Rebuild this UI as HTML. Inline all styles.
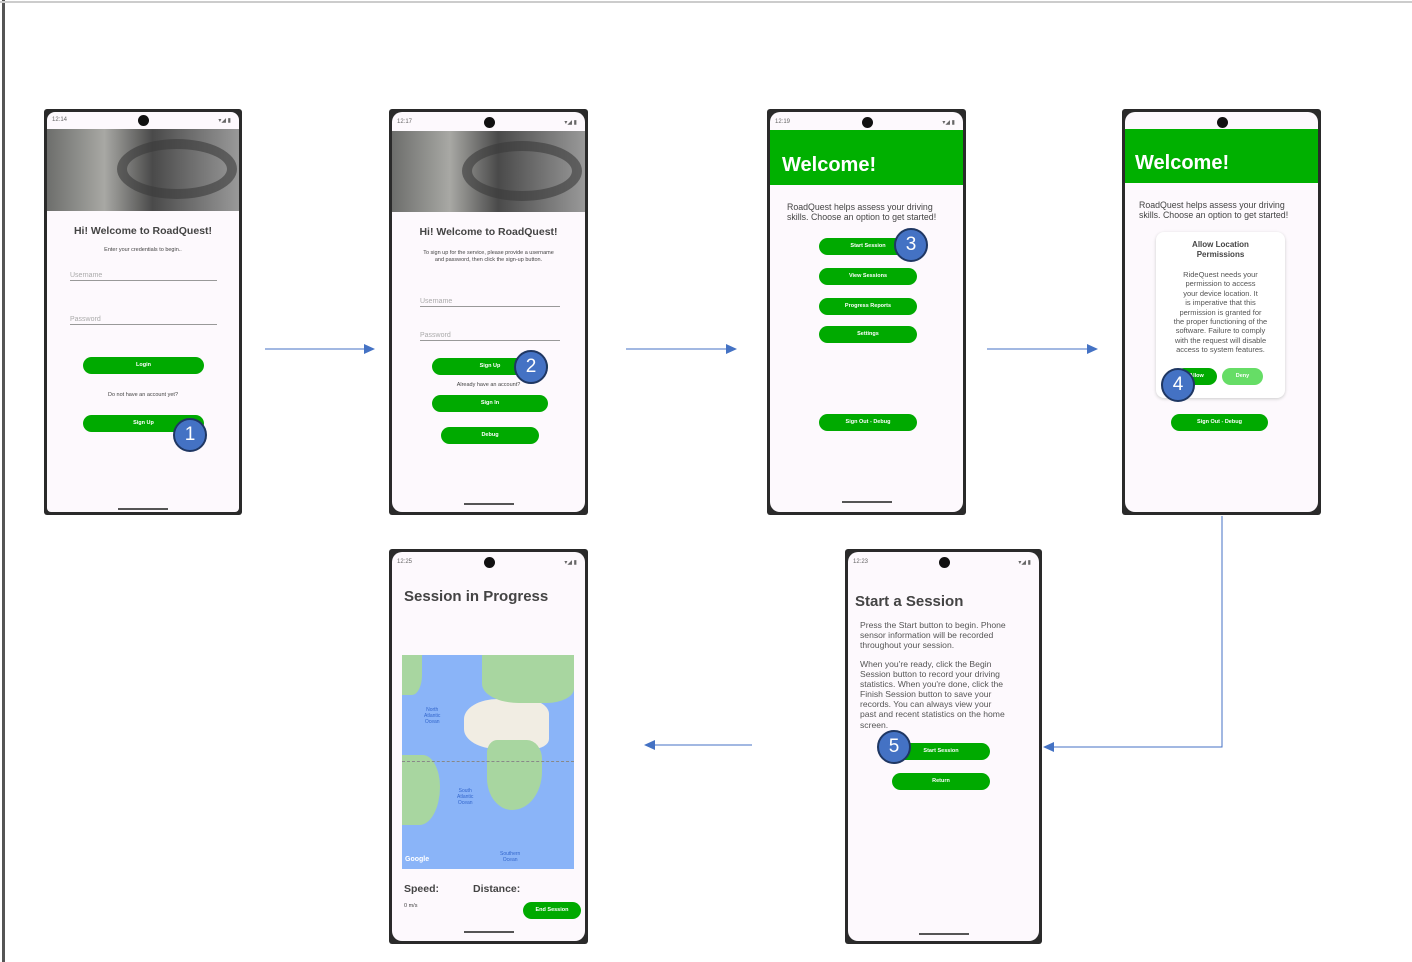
<!DOCTYPE html>
<html><head><meta charset="utf-8"><style>
*{margin:0;padding:0;box-sizing:border-box}
body{width:1412px;height:962px;background:#fff;position:relative;overflow:hidden;font-family:"Liberation Sans",sans-serif;color:#444}
.a{position:absolute}
.ph{position:absolute;width:199px;height:406px;background:#2a2a2a;border-radius:3px}
.sc{position:absolute;left:3px;top:3px;right:3px;bottom:3px;background:#fdf9fd;border-radius:10px;overflow:hidden}
.cam{position:absolute;width:11px;height:11px;border-radius:50%;background:#111;left:50%;margin-left:-5px;top:5px}
.st{position:absolute;top:7px;left:5px;font-size:6px;color:#666}
.sr{position:absolute;top:7px;right:8px;font-size:6px;color:#666}
.btn{position:absolute;height:17px;border-radius:9px;background:#00aa00;color:#fff;font-size:5.5px;font-weight:bold;text-align:center;line-height:17px}
.hb{position:absolute;width:50px;height:2px;background:#555;left:50%;margin-left:-25px}
.c{position:absolute;left:0;right:0;text-align:center}
.badge{position:absolute;width:34px;height:34px;border-radius:50%;background:#4472c4;border:2px solid #1f3763;color:#fff;font-size:19px;text-align:center;line-height:30px;margin:-17px 0 0 -17px}
.lbl{position:absolute;font-size:7px;color:#aaa;border-bottom:1px solid #999;padding-bottom:1px}
.hdr{position:absolute;left:0;right:0;background:#00b000;color:#fff;font-weight:bold;font-size:20px}
.img{position:absolute;left:0;right:0;background:linear-gradient(90deg,#6d6e6c 0%,#a8a8a4 30%,#4a4a4a 55%,#999 100%)}
</style></head><body>
<div class="a" style="left:2px;top:0;width:3px;height:962px;background:#555"></div>
<div class="a" style="left:0;top:1px;width:1412px;height:2px;background:#ccc"></div>

<svg class="a" style="left:0;top:0" width="1412" height="962">
<g stroke="#4472c4" stroke-width="1" fill="#4472c4">
<line x1="265" y1="349" x2="368" y2="349"/><polygon points="375,349 364,344 364,354" stroke="none"/>
<line x1="626" y1="349" x2="729" y2="349"/><polygon points="737,349 726,344 726,354" stroke="none"/>
<line x1="987" y1="349" x2="1090" y2="349"/><polygon points="1098,349 1087,344 1087,354" stroke="none"/>
<polyline points="1222,516 1222,747 1052,747" fill="none"/><polygon points="1043,747 1054,742 1054,752" stroke="none"/>
<line x1="752" y1="745" x2="653" y2="745"/><polygon points="644,745 655,740 655,750" stroke="none"/>
</g></svg>

<!-- Phone 1 -->
<div class="ph" style="left:44px;top:109px;width:198px">
<div class="sc" style="border-radius:8px 8px 4px 4px"><div class="cam" style="top:3px"></div><div class="st" style="top:5px">12:14</div><div class="sr" style="top:5px">▾◢ ▮</div>
<div class="img" style="top:17px;height:82px"><div class="a" style="left:70px;top:10px;width:120px;height:60px;border-radius:50%;border:10px solid #3a3a3a;opacity:.6"></div></div>
<div class="c" style="top:113px;font-size:10.5px;font-weight:bold">Hi! Welcome to RoadQuest!</div>
<div class="c" style="top:135px;font-size:5.5px">Enter your credentials to begin..</div>
<div class="lbl" style="left:23px;top:160px;width:147px">Username</div>
<div class="lbl" style="left:23px;top:204px;width:147px">Password</div>
<div class="btn" style="left:36px;top:245px;width:121px">Login</div>
<div class="c" style="top:280px;font-size:5.5px">Do not have an account yet?</div>
<div class="btn" style="left:36px;top:303px;width:121px">Sign Up</div>
<div class="hb" style="top:396px"></div></div></div>
<div class="badge" style="left:190px;top:435px">1</div>

<!-- Phone 2 -->
<div class="ph" style="left:389px;top:109px">
<div class="sc"><div class="cam"></div><div class="st">12:17</div><div class="sr">▾◢ ▮</div>
<div class="img" style="top:19px;height:81px"><div class="a" style="left:70px;top:10px;width:120px;height:60px;border-radius:50%;border:10px solid #3a3a3a;opacity:.6"></div></div>
<div class="c" style="top:114px;font-size:10.5px;font-weight:bold">Hi! Welcome to RoadQuest!</div>
<div class="c" style="top:138px;font-size:5.5px;line-height:6.5px">To sign up for the service, please provide a username<br>and password, then click the sign-up button.</div>
<div class="lbl" style="left:28px;top:186px;width:140px">Username</div>
<div class="lbl" style="left:28px;top:220px;width:140px">Password</div>
<div class="btn" style="left:40px;top:246px;width:116px">Sign Up</div>
<div class="c" style="top:270px;font-size:5.5px">Already have an account?</div>
<div class="btn" style="left:40px;top:283px;width:116px">Sign In</div>
<div class="btn" style="left:49px;top:315px;width:98px">Debug</div>
<div class="hb" style="top:391px"></div></div></div>
<div class="badge" style="left:531px;top:367px">2</div>

<!-- Phone 3 -->
<div class="ph" style="left:767px;top:109px">
<div class="sc"><div class="cam"></div><div class="st">12:19</div><div class="sr">▾◢ ▮</div>
<div class="hdr" style="top:18px;height:55px;padding:24px 0 0 12px">Welcome!</div>
<div class="a" style="left:17px;top:90px;font-size:8.8px;line-height:10px">RoadQuest helps assess your driving<br>skills. Choose an option to get started!</div>
<div class="btn" style="left:49px;top:126px;width:98px">Start Session</div>
<div class="btn" style="left:49px;top:156px;width:98px">View Sessions</div>
<div class="btn" style="left:49px;top:186px;width:98px">Progress Reports</div>
<div class="btn" style="left:49px;top:214px;width:98px">Settings</div>
<div class="btn" style="left:49px;top:302px;width:98px">Sign Out - Debug</div>
<div class="hb" style="top:389px"></div></div></div>
<div class="badge" style="left:911px;top:245px">3</div>

<!-- Phone 4 -->
<div class="ph" style="left:1122px;top:109px">
<div class="sc"><div class="cam"></div>
<div class="hdr" style="top:17px;height:54px;padding:23px 0 0 10px">Welcome!</div>
<div class="a" style="left:14px;top:88px;font-size:8.8px;line-height:10px">RoadQuest helps assess your driving<br>skills. Choose an option to get started!</div>
<div class="a" style="left:31px;top:120px;width:129px;height:166px;background:#fff;border-radius:8px;box-shadow:0 1px 3px #ccc">
<div class="c" style="top:8px;font-size:8px;font-weight:bold;line-height:10px">Allow Location<br>Permissions</div>
<div class="c" style="top:38px;font-size:7.5px;line-height:9.4px;color:#555">RideQuest needs your<br>permission to access<br>your device location. It<br>is imperative that this<br>permission is granted for<br>the proper functioning of the<br>software. Failure to comply<br>with the request will disable<br>access to system features.</div>
<div class="btn" style="left:20px;top:136px;width:41px">Allow</div>
<div class="btn" style="left:66px;top:136px;width:41px;background:#66dd66">Deny</div>
</div>
<div class="btn" style="left:46px;top:302px;width:97px">Sign Out - Debug</div>
</div></div>
<div class="badge" style="left:1178px;top:385px">4</div>

<!-- Phone 5 -->
<div class="ph" style="left:389px;top:549px;height:395px">
<div class="sc"><div class="cam"></div><div class="st">12:25</div><div class="sr">▾◢ ▮</div>
<div class="a" style="left:12px;top:36px;font-size:15px;font-weight:bold">Session in Progress</div>
<div class="a" style="left:10px;top:103px;width:172px;height:214px;background:#8ab4f8;overflow:hidden">
<div class="a" style="left:62px;top:44px;width:85px;height:50px;background:#f1ede3;border-radius:40% 30% 20% 40%"></div>
<div class="a" style="left:85px;top:85px;width:55px;height:70px;background:#a8d6a0;border-radius:20% 30% 60% 50%"></div>
<div class="a" style="left:80px;top:0;width:92px;height:48px;background:#a8d6a0;border-radius:0 0 30% 40%"></div>
<div class="a" style="left:0;top:100px;width:38px;height:70px;background:#a8d6a0;border-radius:0 50% 60% 0"></div>
<div class="a" style="left:0;top:0;width:20px;height:40px;background:#a8d6a0;border-radius:0 0 50% 0"></div>
<div class="a" style="left:0;top:106px;width:172px;height:0;border-top:1px dashed #888"></div>
<div class="a" style="left:22px;top:52px;font-size:5px;color:#3366cc;text-align:center;line-height:6px">North<br>Atlantic<br>Ocean</div>
<div class="a" style="left:55px;top:133px;font-size:5px;color:#3366cc;text-align:center;line-height:6px">South<br>Atlantic<br>Ocean</div>
<div class="a" style="left:98px;top:196px;font-size:5px;color:#3366cc;text-align:center;line-height:6px">Southern<br>Ocean</div>
<div class="a" style="left:3px;top:201px;font-size:7px;color:#fff;font-weight:bold">Google</div>
</div>
<div class="a" style="left:12px;top:331px;font-size:10.5px;font-weight:bold">Speed:</div>
<div class="a" style="left:81px;top:331px;font-size:10.5px;font-weight:bold">Distance:</div>
<div class="a" style="left:12px;top:351px;font-size:5.5px">0 m/s</div>
<div class="btn" style="left:131px;top:350px;width:58px">End Session</div>
<div class="hb" style="top:379px"></div></div></div>

<!-- Phone 6 -->
<div class="ph" style="left:845px;top:549px;width:197px;height:395px">
<div class="sc"><div class="cam"></div><div class="st">12:23</div><div class="sr">▾◢ ▮</div>
<div class="a" style="left:7px;top:41px;font-size:15px;font-weight:bold">Start a Session</div>
<div class="a" style="left:12px;top:68px;font-size:8.6px;line-height:10px;color:#555">Press the Start button to begin. Phone<br>sensor information will be recorded<br>throughout your session.</div>
<div class="a" style="left:12px;top:107px;font-size:8.6px;line-height:10.1px;color:#555">When you're ready, click the Begin<br>Session button to record your driving<br>statistics. When you're done, click the<br>Finish Session button to save your<br>records. You can always view your<br>past and recent statistics on the home<br>screen.</div>
<div class="btn" style="left:44px;top:191px;width:98px">Start Session</div>
<div class="btn" style="left:44px;top:221px;width:98px">Return</div>
<div class="hb" style="top:381px"></div></div></div>
<div class="badge" style="left:894px;top:747px">5</div>
</body></html>
